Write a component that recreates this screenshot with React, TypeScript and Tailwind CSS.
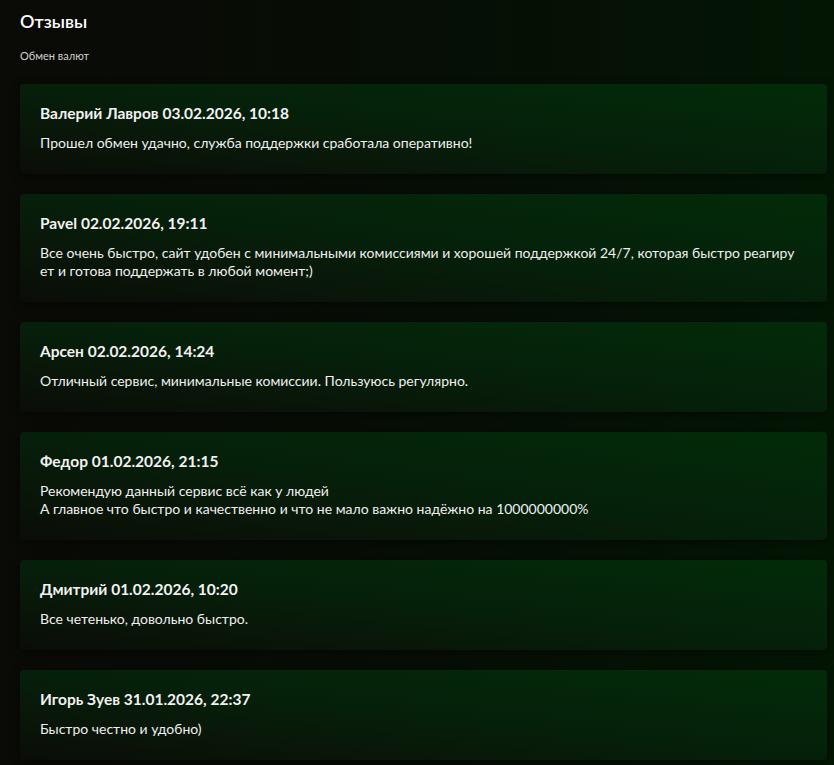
const reviews = [
  { name: 'Валерий Лавров', date: '03.02.2026, 10:18', text: ['Прошел обмен удачно, служба поддержки сработала оперативно!'] },
  {
    name: 'Pavel',
    date: '02.02.2026, 19:11',
    text: ['Все очень быстро, сайт удобен с минимальными комиссиями и хорошей поддержкой 24/7, которая быстро реагиру', 'ет и готова поддержать в любой момент;)'],
  },
  { name: 'Арсен', date: '02.02.2026, 14:24', text: ['Отличный сервис, минимальные комиссии. Пользуюсь регулярно.'] },
  {
    name: 'Федор',
    date: '01.02.2026, 21:15',
    text: ['Рекомендую данный сервис всё как у людей', 'А главное что быстро и качественно и что не мало важно надёжно на 1000000000%'],
  },
  { name: 'Дмитрий', date: '01.02.2026, 10:20', text: ['Все четенько, довольно быстро.'] },
  { name: 'Игорь Зуев', date: '31.01.2026, 22:37', text: ['Быстро честно и удобно)'] },
];

export default function App() {
  return (
    <div
      className="min-h-screen bg-gradient-to-r from-[#0a0a06] via-[#060e05] to-[#031604] pl-5 pr-[7px] pt-[9px] pb-10 text-white"
      style={{ fontFamily: 'Lato, "Noto Sans", sans-serif' }}
    >
      {/* Header */}
      <h1 className="text-[18px] font-semibold leading-[24px]">Отзывы</h1>
      <p className="mt-[16px] text-[11px] leading-[14px] text-[#cfcfcf]">Обмен валют</p>

      {/* Reviews */}
      <div className="mt-[21px] flex flex-col gap-5">
        {reviews.map((r) => (
          <div
            key={r.name + r.date}
            className="rounded-[4px] bg-gradient-to-tr from-[#0a0d07] via-[#05200a] to-[#022b08] px-5 pt-[18px] pb-[22px] shadow-[0_2px_8px_rgba(0,0,0,0.5)]"
          >
            <div className="text-[15.5px] font-bold leading-[22px] text-[#f2f2f2]">
              {r.name} {r.date}
            </div>
            <div className="mt-[10px] text-[14px] leading-[18px] text-[#f0f0f0]">
              {r.text.map((line) => (
                <div key={line}>{line}</div>
              ))}
            </div>
          </div>
        ))}
      </div>
    </div>
  );
}
